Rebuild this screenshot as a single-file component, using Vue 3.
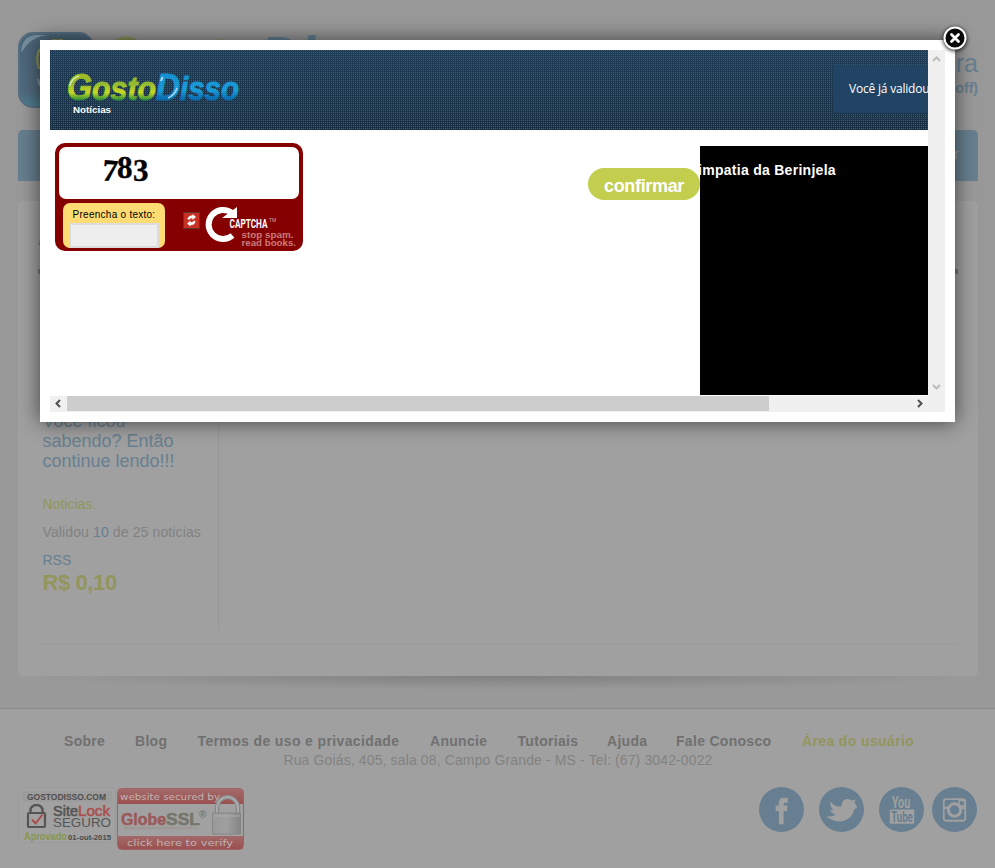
<script setup>
const links = [
  { label: 'Sobre', width: 71 },
  { label: 'Blog', width: 62.5 },
  { label: 'Termos de uso e privacidade', width: 232.5 },
  { label: 'Anuncie', width: 87.5 },
  { label: 'Tutoriais', width: 89.5 },
  { label: 'Ajuda', width: 69 },
  { label: 'Fale Conosco', width: 126 },
  { label: 'Área do usuário', width: 114, active: true },
]
</script>

<template>
  <div class="page">
    <header class="top">
      <svg class="brand" width="400" height="80" viewBox="0 0 400 80">
        <defs>
          <linearGradient id="badge" x2="0" y2="1">
            <stop offset="0" stop-color="#4c6579" /><stop offset=".8" stop-color="#526b7e" /><stop offset="1" stop-color="#4f8296" />
          </linearGradient>
        </defs>
        <rect x="1" y="1" width="74" height="74" rx="14" fill="url(#badge)" stroke="#566f82" stroke-width="2" />
        <path d="M3 20Q4 4 18 3H30Q12 5 4 20Z" fill="#8099a8" opacity=".8" />
        <path d="M22 17Q17 24 21 37" fill="none" stroke="#8c925b" stroke-width="2.500" />
        <path d="M20 47L22 54" stroke="#909497" stroke-width="2" />
        <path d="M34 7h5v3h-5zM40 7h5v3h-5z" fill="#8c925b" />
        <text x="84" y="51" textLength="156" lengthAdjust="spacingAndGlyphs" class="brand-word lime">Gosto</text>
        <text x="242" y="51" textLength="150" lengthAdjust="spacingAndGlyphs" class="brand-word sky">Disso</text>
      </svg>
      <div class="greeting">
        <div class="name">Ferreira</div>
        <b class="logoff">(Logoff)</b>
      </div>
    </header>
    <nav class="bar">Sacar</nav>

    <main class="card">
      <div class="heading">A</div>
      <div class="rule"></div>
      <div class="columns">
        <aside>
          <h2>Você ficou<br>sabendo? Então<br>continue lendo!!!</h2>
          <p class="lime-text">Noticias.</p>
          <p>Validou <span>10</span> de 25 noticias</p>
          <p class="rss">RSS</p>
          <strong>R$ 0,10</strong>
        </aside>
      </div>
    </main>
    <div class="card-shadow"></div>

    <footer>
      <div class="links">
        <b v-for="l in links" :key="l.label" :class="{ active: l.active }" :style="{ width: l.width + 'px' }">{{ l.label }}</b>
      </div>
      <div class="address">Rua Goiás, 405, sala 08, Campo Grande - MS - Tel: (67) 3042-0022</div>
      <div class="bottom">
        <svg width="228" height="66" viewBox="0 0 228 66" class="seals">
          <rect x=".5" y="1.5" width="97" height="55" rx="4" fill="#a1a1a1" stroke="#9b9b9b" />
          <rect x="4" y="5" width="90" height="11" fill="#9c9c9c" />
          <text x="9" y="14" textLength="79" lengthAdjust="spacingAndGlyphs" font-size="8.500" font-weight="700" fill="#4f4f4f">GOSTODISSO.COM</text>
          <rect x="10" y="27" width="17" height="14" rx="1" fill="none" stroke="#555" stroke-width="2.2" />
          <path d="M12.500 27v-3a6 5 0 0 1 12 0v3" fill="none" stroke="#555" stroke-width="2.400" />
          <path d="M14 33.500l3.500 4 7-9" fill="none" stroke="#a84d4d" stroke-width="2" />
          <text x="35" y="30" textLength="25" lengthAdjust="spacingAndGlyphs" font-size="14.500" fill="#555" stroke="#555" stroke-width=".6">Site</text>
          <text x="60" y="30" textLength="32" lengthAdjust="spacingAndGlyphs" font-size="14.500" fill="#aa5050" stroke="#aa5050" stroke-width=".6">Lock</text>
          <text x="35" y="41" textLength="58" lengthAdjust="spacingAndGlyphs" font-size="12" fill="#555">SEGURO</text>
          <text x="6" y="54" textLength="43" lengthAdjust="spacingAndGlyphs" font-size="10" font-weight="700" fill="#889750">Aprovado</text>
          <text x="50" y="54" textLength="43" lengthAdjust="spacingAndGlyphs" font-size="7.500" font-weight="700" fill="#4a4a4a">01-out-2015</text>
          <defs>
            <linearGradient id="redseal" x2="0" y2="1"><stop stop-color="#a36969" /><stop offset="1" stop-color="#9b5050" /></linearGradient>
            <linearGradient id="steel"><stop stop-color="#999" /><stop offset=".5" stop-color="#a0a0a0" /><stop offset="1" stop-color="#858585" /></linearGradient>
          </defs>
          <rect x="99.500" y="2.500" width="126" height="61" rx="4" fill="#a1a1a1" stroke="#a06262" />
          <path d="M100 18V6q0-3 3-3h119q3 0 3 3v12z" fill="url(#redseal)" />
          <path d="M100 50h125v10q0 3-3 3H103q-3 0-3-3z" fill="url(#redseal)" />
          <text x="102" y="13.500" textLength="100" lengthAdjust="spacingAndGlyphs" class="vera" font-size="9.500" fill="#c0b5b5">website secured by</text>
          <text x="103" y="39" textLength="45" lengthAdjust="spacingAndGlyphs" font-size="16" font-weight="700" fill="#9a5959" stroke="#9a5959" stroke-width=".5">Globe</text>
          <text x="148" y="39" textLength="34" lengthAdjust="spacingAndGlyphs" font-size="16" font-weight="700" fill="#75766b" stroke="#75766b" stroke-width=".5">SSL</text>
          <path d="M106 42h74" stroke="#9b8e8c" stroke-width="3" opacity=".4" />
          <text x="181" y="32" font-size="10" font-weight="700" fill="#77776d">®</text>
          <path d="M199 28V22a10.500 11 0 0 1 21 0v6" fill="none" stroke="#888" stroke-width="4.500" />
          <path d="M199 28V22a10.500 11 0 0 1 21 0v6" fill="none" stroke="#aaa" stroke-width="2" />
          <rect x="194.500" y="27" width="28" height="21" rx="1" fill="url(#steel)" stroke="#858585" />
          <path d="M195 30h27" stroke="#aaa" stroke-width="1" />
          <text x="109" y="60" textLength="106" lengthAdjust="spacingAndGlyphs" class="vera" font-size="9.500" fill="#c0b2b2">click here to verify</text>
        </svg>
        <div class="social">
          <svg viewBox="0 0 46 46"><circle cx="23" cy="23" r="23" /><path class="ink" d="M20.300 38V24.500H17V19h3.300v-3.500Q20.300 11 26 11h3.500V16h-3q-1.300 0-1.300 1.500V19h4l-.6 5.500h-3.400V38z" /></svg>
          <svg viewBox="0 0 46 46"><circle cx="23" cy="23" r="23" /><path class="ink" d="M7.500 30Q14 30.500 17 28Q12.500 27 11.500 23.500L15 23Q10.500 20.500 12 15Q16 20.500 23 20Q23 13.500 27.500 12.500Q31 11.500 33.500 14L37.500 12.500L36 16.500L37.500 17L39 21L36 23Q34 33 23.500 35Q14 36 7.500 30z" /></svg>
          <svg viewBox="0 0 46 46"><circle cx="23" cy="23" r="23" /><text x="13" y="21.500" textLength="19" lengthAdjust="spacingAndGlyphs" class="ink yt" font-size="16">You</text><rect class="ink" x="11" y="23" width="25" height="14.500" rx="1" /><text x="12.500" y="35.700" textLength="22" lengthAdjust="spacingAndGlyphs" class="yt" font-size="15">Tube</text></svg>
          <svg viewBox="0 0 46 46"><circle cx="23" cy="23" r="23" /><rect x="12" y="12.500" width="22" height="22" rx="2.500" class="ring" /><path class="ink" d="M12 20h5.500v2.500H12zM28.500 20H34v2.500h-5.500z" /><rect class="ink" x="27" y="13" width="7" height="7" /><rect x="28.500" y="14.500" width="4" height="4" rx=".5" /><circle cx="23" cy="23.500" r="6.300" class="ring thick" /></svg>
        </div>
      </div>
    </footer>

    <section class="modal">
      <div class="frame">
        <div class="view">
          <div class="news-head">
            <svg width="195" height="70" viewBox="0 0 195 70">
              <defs>
                <linearGradient id="green" gradientUnits="userSpaceOnUse" x1="0" y1="24" x2="0" y2="51"><stop stop-color="#a2bd22" /><stop offset=".35" stop-color="#91b833" /><stop offset=".68" stop-color="#c9d922" /><stop offset="1" stop-color="#15843d" /></linearGradient>
                <linearGradient id="blue" gradientUnits="userSpaceOnUse" x1="0" y1="24" x2="0" y2="51"><stop stop-color="#1690d2" /><stop offset=".6" stop-color="#1b9bd8" /><stop offset="1" stop-color="#0662a5" /></linearGradient>
              </defs>
              <g class="logo">
                <g fill="url(#green)" stroke="url(#green)">
                  <text x="17" y="49.500" textLength="25" font-size="36" lengthAdjust="spacingAndGlyphs">G</text>
                  <text x="42" y="49.500" textLength="64" font-size="34" lengthAdjust="spacingAndGlyphs">osto</text>
                </g>
                <g fill="url(#blue)" stroke="url(#blue)">
                  <text x="106" y="49.500" textLength="24" font-size="36" lengthAdjust="spacingAndGlyphs">D</text>
                  <text x="130" y="49.500" textLength="59" font-size="34" lengthAdjust="spacingAndGlyphs">isso</text>
                </g>
              </g>
              <path d="M19.500 36Q22 28 29 26" fill="none" stroke="#eef6dc" stroke-width="1.500" opacity=".75" />
              <path d="M111 31L112.500 27" stroke="#dff1fb" stroke-width="2" opacity=".8" />
              <path d="M127 38Q125 45 118 48" fill="none" stroke="#dff1fb" stroke-width="1.500" opacity=".75" />
              <text x="23" y="63" textLength="38" lengthAdjust="spacingAndGlyphs" font-size="9.500" font-weight="700" fill="#fff">Notícias</text>
            </svg>
            <div class="valid">Você já validou</div>
          </div>
          <div class="news-body">
            <div class="captcha">
              <div class="challenge">
                <svg width="240" height="52" viewBox="0 0 240 52">
                  <g class="digits"><text x="43" y="34" transform="rotate(5 50 28)">7</text><text x="58" y="30.500">8</text><text x="74" y="34">3</text></g>
                </svg>
              </div>
              <div class="captcha-foot">
                <label><span>Preencha o texto:</span><i></i></label>
                <svg width="115" height="47" viewBox="0 0 115 47">
                  <rect x=".5" y="9.500" width="16" height="16" fill="#c63124" stroke="#5f3431" />
                  <path d="M4.500 16q1-4 5-3.500V11l3.500 3-3.500 3v-1.700q-2.500-.5-3.500 1.700zM12.500 18.500q-1 4-5 3.500v1.500L4 20.500l3.500-3v1.700q2.500.5 3.500-1.700z" fill="#fff" />
                  <path d="M49.500 32.500A14.500 14.500 0 1 1 49 10" fill="none" stroke="#fff" stroke-width="6" />
                  <path d="M54 4V15H39z" fill="#fff" />
                  <text x="46.500" y="25" textLength="38" lengthAdjust="spacingAndGlyphs" font-family="Roboto, sans-serif" font-size="13.500" font-weight="700" fill="#fff">CAPTCHA</text>
                  <text x="86" y="19" font-size="5" fill="#d8a5a5">TM</text>
                  <text x="58.500" y="35" textLength="52" lengthAdjust="spacingAndGlyphs" class="soft">stop spam.</text>
                  <text x="58.500" y="43" textLength="54.500" lengthAdjust="spacingAndGlyphs" class="soft">read books.</text>
                </svg>
              </div>
            </div>
            <button>confirmar</button>
            <div class="video"><b>impatia da Berinjela</b></div>
          </div>
        </div>
        <div class="vbar">
          <svg viewBox="0 0 9 6"><path d="M1 5l3.500-3.500L8 5" /></svg>
          <svg viewBox="0 0 9 6"><path d="M1 1l3.500 3.500L8 1" /></svg>
        </div>
        <div class="hbar">
          <svg viewBox="0 0 6 9"><path d="M5 1L1.500 4.500 5 8" /></svg>
          <div class="thumb"></div>
          <svg viewBox="0 0 6 9"><path d="M1 1l3.500 3.500L1 8" /></svg>
        </div>
      </div>
      <svg class="close" width="30" height="30" viewBox="0 0 30 30"><circle cx="15" cy="15" r="10.500" fill="#080808" stroke="#fff" stroke-width="2" /><path d="M11.500 11.500l7 7M18.500 11.500l-7 7" stroke="#fff" stroke-width="2.800" stroke-linecap="round" /></svg>
    </section>
  </div>
</template>

<style>
body { margin: 0; background: #a0a0a0; }
</style>
<style scoped>
* { box-sizing: border-box; }
.page { position: relative; width: 995px; height: 868px; overflow: hidden; background: #999; color: #828282; font: 14px/20px "Liberation Sans", Arial, sans-serif; display: flex; flex-direction: column; }
.top { height: 130px; padding: 32px 17px 0 18px; display: flex; justify-content: space-between; color: #677f90; }
.brand-word { font: italic 700 66px "Liberation Sans", sans-serif; }
.lime { fill: #8c925b; }
.sky { fill: #628296; }
.greeting { padding-top: 17px; text-align: right; }
.name { font-size: 25px; line-height: 29px; }
.logoff { font-size: 14px; line-height: 20px; display: block; }
.bar { margin: 0 17px 0 18px; height: 51px; background: #677f90; border-radius: 5px 5px 0 0; text-align: right; padding-right: 19px; line-height: 49px; color: #a0a0a0; }
.card { margin: 20px 17px 0 18px; height: 475px; border-radius: 5px; background: #a0a0a0; padding: 0 20px; flex: none; }
.card-shadow { height: 14px; margin: 0 27px; flex: none; background: radial-gradient(50% 100% at 50% 0, #818181, #999); }
.heading { padding-top: 28px; height: 68px; color: #677f90; font-size: 19px; }
.rule { height: 5px; background: #777; }
.columns { height: 371px; border-bottom: 1px solid #9b9b9b; }
aside { width: 181px; height: 357px; border-right: 1px solid #979797; padding: 137px 0 0 4.500px; }
h2 { margin: 0 0 23px; font-size: 18px; line-height: 20px; font-weight: 400; color: #677f90; }
p { margin: 0 0 8px; white-space: nowrap; letter-spacing: .12px; }
p span, p.rss { color: #677f90; }
p.lime-text { color: #92965c; letter-spacing: 0; }
p.rss { margin: 0; letter-spacing: 0; }
aside strong { font-size: 22px; line-height: 26px; color: #92965c; display: block; letter-spacing: -.4px; }
footer { margin-top: 18px; flex: 1; border-top: 1px solid #8c8c8c; background: #a0a0a0; padding: 22px 17px 0 18px; display: flex; flex-direction: column; }
.links { display: flex; padding-left: 46px; height: 20px; white-space: nowrap; color: #707070; }
.links b { letter-spacing: .3px; flex: none; }
.links b:nth-child(3), .links .active { letter-spacing: .37px; }
.links .active { color: #92965c; }
.address { text-align: center; line-height: 18px; letter-spacing: .13px; }
.bottom { display: flex; justify-content: space-between; padding-top: 17px; }
.seals { flex: none; font-family: "Liberation Sans", sans-serif; }
.vera { font-family: "DejaVu Sans", sans-serif; }
.social { display: flex; gap: 15px; padding: 1px 1px 0 0; }
.social svg { width: 45px; height: 45px; fill: #677f90; }
.social svg:last-child { margin-left: -7px; }
.social .ink { fill: #a0a0a0; }
.social .ring { fill: none; stroke: #a0a0a0; stroke-width: 1.800; }
.social .thick { stroke-width: 3; }
.yt { font-family: Roboto, sans-serif; font-weight: 700; }
.modal { position: absolute; left: 40px; top: 40px; width: 915px; height: 382px; padding: 10px; background: #fff; box-shadow: 0 0 20px rgba(0,0,0,.6); }
.frame { display: grid; grid-template: 346px 16px / 878px 17px; }
.view { overflow: hidden; background: #fff; }
.news-head { height: 80px; display: flex; justify-content: space-between; align-items: flex-start; background: conic-gradient(#2e5f88 25%, transparent 0) 0 0 / 2px 2px, linear-gradient(#1e3c57, #183044); }
.logo { font-family: "Liberation Sans", sans-serif; font-style: italic; font-weight: 700; stroke-width: .9; }
.valid { margin-top: 15px; width: 95px; height: 48px; background: #214465; color: #fff; padding-left: 16px; font: 12px/48px "Open Sans", sans-serif; letter-spacing: -.2px; white-space: nowrap; overflow: hidden; }
.news-body { display: flex; align-items: flex-start; }
.captcha { flex: none; width: 248px; height: 108px; margin: 13px 0 0 5px; padding: 4px; border-radius: 10px; background: #850000; }
.challenge { height: 52px; border-radius: 7px; background: #fff; }
.digits { font: 700 31px "Liberation Serif", serif; fill: #000; stroke: #000; stroke-width: .4; }
.captcha-foot { display: flex; padding: 4px 0 0 4px; }
.captcha-foot svg { flex: none; }
label { flex: none; width: 102px; height: 45px; margin-right: 18px; border-radius: 7px; background: #ffdc73; color: #000; font-size: 10px; display: flex; flex-direction: column; align-items: center; padding-top: 6px; }
label span { line-height: 12px; letter-spacing: .26px; white-space: nowrap; }
label i { width: 90px; height: 26px; margin-top: 2px; border: 2px solid #dcdcdc; background: #eee; }
.soft { font: 700 8.500px "Liberation Sans", sans-serif; fill: #c97d7d; }
button { margin: 38px 0 0 285px; width: 112px; height: 32px; border: 0; border-radius: 16px; background: #c3ce4f; color: #fff; font: 700 18px/36px "Liberation Sans", sans-serif; letter-spacing: -.33px; padding: 0; flex: none; }
.video { margin-top: 16px; width: 228px; height: 249px; background: #000; color: #fff; padding-top: 14px; flex: none; }
.video b { margin-left: -2px; white-space: nowrap; letter-spacing: .28px; }
.vbar { background: #f0f0f0; display: flex; flex-direction: column; align-items: center; justify-content: space-between; padding: 6px 0; }
.vbar svg { width: 9px; height: 6px; }
.hbar { grid-column: 1 / 3; background: #f0f0f0; display: flex; align-items: center; padding: 0 0 1px 5px; }
.hbar svg { width: 6px; height: 9px; }
.hbar .thumb { width: 702px; height: 15px; margin: 0 148px 0 6px; background: #cdcdcd; }
.frame > div > svg path { fill: none; stroke: #505050; stroke-width: 2; }
.frame > .vbar > svg path { stroke: #bcbcbc; }
.close { position: absolute; left: 900px; top: -17px; filter: drop-shadow(0 1px 2px #000); }
</style>
